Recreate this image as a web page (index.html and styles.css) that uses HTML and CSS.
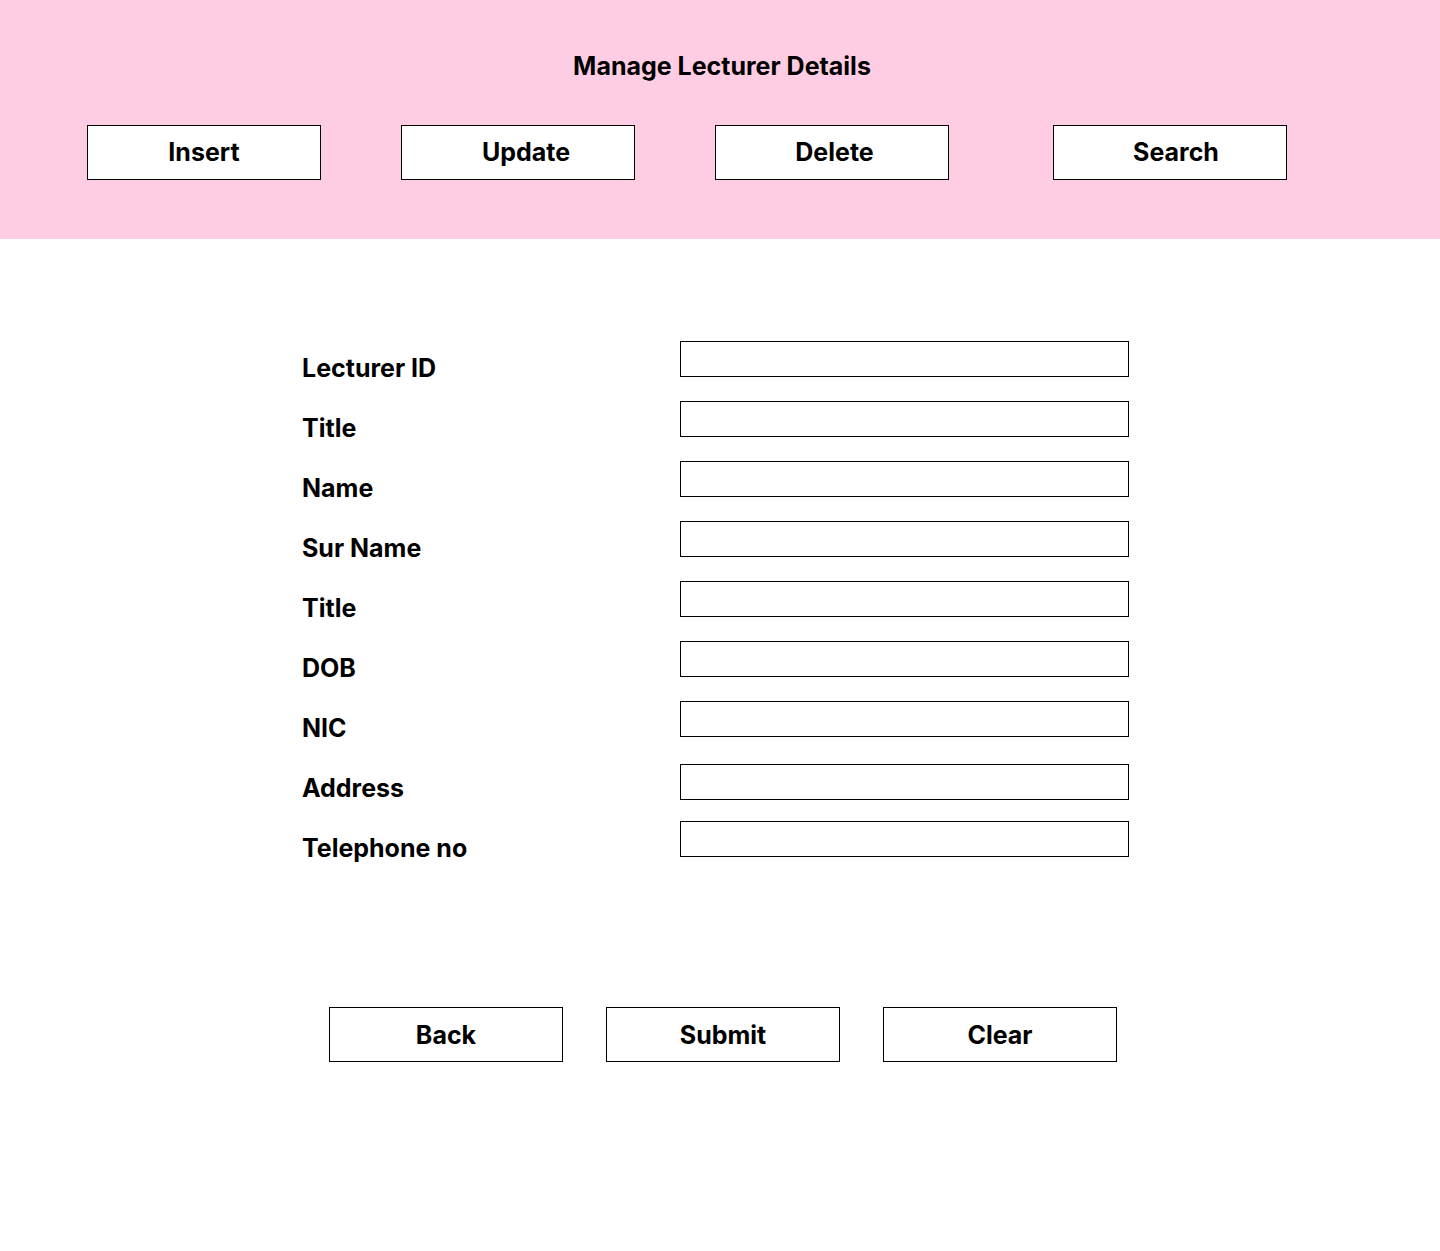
FILE: index.html
```html
<!DOCTYPE html>
<html>
<head>
    <title>Manage Lecturer Details</title>
    <meta name="viewport" content="width=device-width, initial-scale=1.0">
    <link rel="stylesheet" href="styles.css">
</head>
<body>
    <div class="topo">
        <h1>Manage Lecturer Details</h1>
        <div class="menu">
            <button class="botao botao--insert">Insert</button>
            <button class="botao botao--update">Update</button>
            <button class="botao botao--delete">Delete</button>
            <button class="botao botao--search">Search</button>
        </div>
    </div>

    <form class="formulario">
        <label class="rotulo">Lecturer ID</label>
        <input class="campo" type="text">

        <label class="rotulo">Title</label>
        <input class="campo" type="text">

        <label class="rotulo">Name</label>
        <input class="campo" type="text">

        <label class="rotulo">Sur Name</label>
        <input class="campo" type="text">

        <label class="rotulo">Title</label>
        <input class="campo" type="text">

        <label class="rotulo">DOB</label>
        <input class="campo" type="text">

        <label class="rotulo">NIC</label>
        <input class="campo" type="text">

        <label class="rotulo">Address</label>
        <input class="campo campo--desce" type="text">

        <label class="rotulo">Telephone no</label>
        <input class="campo" type="text">
    </form>

    <div class="acoes">
        <button class="botao">Back</button>
        <button class="botao">Submit</button>
        <button class="botao">Clear</button>
    </div>
</body>
</html>
```

FILE: styles.css
```css
body {
    margin: 0;
    font-family: Inter, "Noto Sans", sans-serif;
    background-color: #fff;
    color: #000;
}

.topo {
    background-color: #ffcde3;
    height: 239px;
    padding-top: 51px;
    box-sizing: border-box;
}

h1 {
    margin: 0;
    font-size: 25px;
    line-height: 30px;
    font-weight: 700;
    text-align: center;
    padding-left: 4px;
}

.menu {
    display: flex;
    gap: 80px;
    padding-left: 87px;
    margin-top: 44px;
}

.menu .botao {
    padding-bottom: 2px;
}

.botao {
    width: 234px;
    height: 55px;
    padding: 0;
    border: 1px solid #000;
    background: #fff;
    font-family: Inter, "Noto Sans", sans-serif;
    font-size: 25px;
    font-weight: 700;
    color: #000;
    cursor: pointer;
}

.botao--update {
    padding-left: 16px;
}

.botao--delete {
    padding-left: 5px;
}

.botao--search {
    margin-left: 24px;
    padding-left: 12px;
}

/* formulario */
.formulario {
    display: grid;
    grid-template-columns: 378px 449px;
    grid-auto-rows: 60px;
    margin-top: 102px;
    padding-left: 302px;
}

.rotulo {
    padding-top: 12px;
    font-size: 25px;
    line-height: 30px;
    font-weight: 700;
}

.campo {
    height: 36px;
    box-sizing: border-box;
    border: 1px solid #000;
    margin: 0;
    padding: 0 8px;
    font-family: Inter, "Noto Sans", sans-serif;
    font-size: 18px;
}

.campo--desce {
    margin-top: 3px;
}

.acoes {
    display: flex;
    justify-content: center;
    gap: 43px;
    padding-left: 6px;
    margin-top: 126px;
}
```
